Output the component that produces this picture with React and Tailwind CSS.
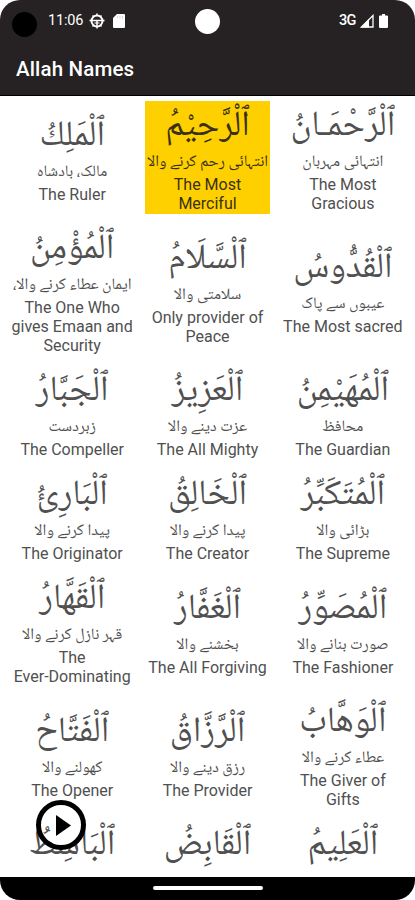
import React, { useState } from 'react';

const names = [
  { arabic: 'ٱلْرَّحْمَـانُ', urdu: 'انتہائی مہربان', english: 'The Most Gracious' },
  { arabic: 'ٱلْرَّحِيْمُ', urdu: 'انتہائی رحم کرنے والا', english: 'The Most Merciful' },
  { arabic: 'ٱلْمَلِكُ', urdu: 'مالک، بادشاہ', english: 'The Ruler' },
  { arabic: 'ٱلْقُدُّوسُ', urdu: 'عیبوں سے پاک', english: 'The Most sacred' },
  { arabic: 'ٱلْسَّلَامُ', urdu: 'سلامتی والا', english: 'Only provider of Peace' },
  { arabic: 'ٱلْمُؤْمِنُ', urdu: 'ایمان عطاء کرنے والا،', english: 'The One Who gives Emaan and Security' },
  { arabic: 'ٱلْمُهَيْمِنُ', urdu: 'محافظ', english: 'The Guardian' },
  { arabic: 'ٱلْعَزِيزُ', urdu: 'عزت دینے والا', english: 'The All Mighty' },
  { arabic: 'ٱلْجَبَّارُ', urdu: 'زبردست', english: 'The Compeller' },
  { arabic: 'ٱلْمُتَكَبِّرُ', urdu: 'بڑائی والا', english: 'The Supreme' },
  { arabic: 'ٱلْخَالِقُ', urdu: 'پیدا کرنے والا', english: 'The Creator' },
  { arabic: 'ٱلْبَارِئُ', urdu: 'پیدا کرنے والا', english: 'The Originator' },
  { arabic: 'ٱلْمُصَوِّرُ', urdu: 'صورت بنانے والا', english: 'The Fashioner' },
  { arabic: 'ٱلْغَفَّارُ', urdu: 'بخشنے والا', english: 'The All Forgiving' },
  { arabic: 'ٱلْقَهَّارُ', urdu: 'قہر نازل کرنے والا', english: 'The\nEver-Dominating' },
  { arabic: 'ٱلْوَهَّابُ', urdu: 'عطاء کرنے والا', english: 'The Giver of\nGifts' },
  { arabic: 'ٱلْرَّزَّاقُ', urdu: 'رزق دینے والا', english: 'The Provider' },
  { arabic: 'ٱلْفَتَّاحُ', urdu: 'کھولنے والا', english: 'The Opener' },
  { arabic: 'ٱلْعَلِيمُ', urdu: '', english: '' },
  { arabic: 'ٱلْقَابِضُ', urdu: '', english: '' },
  { arabic: 'ٱلْبَاسِطُ', urdu: '', english: '' },
];

const StatusBar = () => (
  <div className="relative flex h-[41px] items-center justify-between pl-[48px] pr-[27px] text-white">
    <div className="absolute left-[12px] top-[12px] h-[25px] w-[25px] rounded-full bg-black" />
    <div className="absolute left-[195px] top-[9px] h-[25px] w-[25px] rounded-full bg-white" />
    <div className="flex items-center">
      <span className="w-[36px] text-[14.5px] tracking-[-0.2px]">11:06</span>
      <svg className="ml-[5px] h-[16px] w-[16px]" viewBox="0 0 16 16" fill="none" stroke="currentColor">
        <circle cx="8" cy="8" r="5.5" strokeWidth="2" />
        <path d="M.5 7.500h15M8 8v5M8 .5v2M8 13.500v2M3.500 2.500l1.500 1.500M12.500 2.500 11 4M3.500 13.500 5 12M12.500 13.500 11 12" strokeWidth="1.5" />
        <path d="M5.500 10h5" strokeWidth="1.2" />
      </svg>
      <svg className="ml-[8px] h-[14px] w-[12px]" viewBox="0 0 12 14" fill="currentColor">
        <path d="M4 0h7a1 1 0 0 1 1 1v12a1 1 0 0 1-1 1H1a1 1 0 0 1-1-1V4z" />
        <path d="M4.5 2v2.5M7 2v2.5M9.5 2v2.5" stroke="#d5d3d4" />
      </svg>
    </div>
    <div className="flex items-center">
      <span className="text-[14.5px] font-medium tracking-[-0.5px]">3G</span>
      <svg className="ml-[4px] h-[14px] w-[14px]" viewBox="0 0 14 14">
        <path d="M1.500 13 13 1.500V13z" fill="none" stroke="currentColor" strokeWidth="1.3" />
        <path d="M1 13.500 9 5v8.500z" fill="currentColor" />
      </svg>
      <svg className="ml-[5px] h-[14px] w-[9px]" viewBox="0 0 9 14" fill="currentColor">
        <path d="M3 0h3v1.500h2a1 1 0 0 1 1 1V13a1 1 0 0 1-1 1H1a1 1 0 0 1-1-1V2.500a1 1 0 0 1 1-1h2z" />
      </svg>
    </div>
  </div>
);

const NameCard = ({ item, active, onClick }) => (
  <div
    onClick={onClick}
    className={`flex flex-col items-center justify-center pb-px text-center ${
      active ? 'bg-[#ffd000] text-[#3a3015]' : 'text-[#505050]'
    }`}
  >
    <div
      dir="rtl"
      className="h-[50px] whitespace-nowrap font-['Noto_Naskh_Arabic','DejaVu_Sans',sans-serif] text-[35.5px] leading-[54px]"
    >
      {item.arabic}
    </div>
    <div
      dir="rtl"
      className="h-[24px] whitespace-nowrap font-['Noto_Naskh_Arabic','DejaVu_Sans',sans-serif] text-[16px] leading-[24px]"
    >
      {item.urdu}
    </div>
    <div className="min-h-[19px] w-full whitespace-pre-line text-[16px] leading-[19px]">{item.english}</div>
  </div>
);

const App = () => {
  const [selected, setSelected] = useState(1);

  return (
    <div className="h-[900px] w-[415px] overflow-hidden bg-white font-[Roboto,sans-serif]">
      <div className="relative flex h-full flex-col overflow-hidden rounded-[20px] bg-white">
        {/* Header */}
        <header className="h-[96px] shrink-0 border-b border-black bg-[#262223]">
          <StatusBar />
          <h1 className="pl-[16px] pt-[13px] text-[20.500px] font-medium leading-[30px] tracking-[0.15px] text-white">
            Allah Names
          </h1>
        </header>

        {/* Names grid */}
        <main dir="rtl" className="grid min-h-0 flex-1 auto-rows-max grid-cols-3 gap-x-[11px] gap-y-[10px] overflow-hidden px-[10px] pt-[5px]">
          {names.map((item, index) => (
            <NameCard
              key={item.arabic}
              item={item}
              active={selected === index}
              onClick={() => setSelected(index)}
            />
          ))}
        </main>

        {/* Play button */}
        <button className="absolute left-[36px] top-[800px] flex h-[50px] w-[50px] items-center justify-center rounded-full border-[5px] border-black">
          <svg className="ml-[4px] h-[21px] w-[15px]" viewBox="0 0 15 22" preserveAspectRatio="none" fill="#000">
            <path d="M0 0l15 11L0 22z" />
          </svg>
        </button>

        {/* Navigation bar */}
        <footer className="flex h-[23px] shrink-0 justify-center bg-black pt-[9px]">
          <div className="h-[4px] w-[110px] rounded-full bg-white" />
        </footer>
      </div>
    </div>
  );
};

export default App;
